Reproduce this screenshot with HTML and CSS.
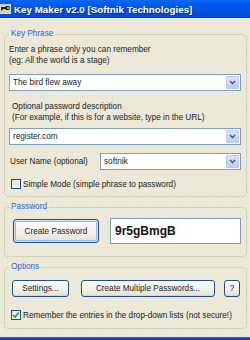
FILE: index.html
```html
<!DOCTYPE html>
<html lang="en">
<head>
  <meta charset="UTF-8">
  <title>Key Maker v2.0</title>
  <link rel="stylesheet" href="styles.css">
</head>
<body>

  <div class="window">
    <div class="titlebar">
      <svg class="app-icon" width="11" height="10" viewBox="0 0 11 10">
        <rect x="0" y="0" width="11" height="10" fill="#d8d4c4"/>
        <path d="M1 3 L5 3 L6 2 L9 2 L10 4 L9 6 L6 6 L5 5 L3 5 L2 7 L1 6 Z" fill="#222"/>
        <circle cx="8" cy="4" r="0.9" fill="#d8d4c4"/>
      </svg>
      <span>Key Maker v2.0 [Softnik Technologies]</span>
    </div>

    <div class="client">
      <fieldset class="group group-phrase">
        <legend>Key Phrase</legend>
        <p class="hint">Enter a phrase only you can remember<br>(eg: All the world is a stage)</p>
        <div class="combo combo-phrase">
          <span class="combo-text">The bird flew away</span>
          <span class="drop"><svg width="7" height="5" viewBox="0 0 7 5"><path d="M1 1 L3.5 3.5 L6 1" fill="none" stroke="#4d6185" stroke-width="1.6"/></svg></span>
        </div>
        <p class="hint hint-desc">Optional password description<br>(For example, if this is for a website, type in the URL)</p>
        <div class="combo combo-desc">
          <span class="combo-text">register.com</span>
          <span class="drop"><svg width="7" height="5" viewBox="0 0 7 5"><path d="M1 1 L3.5 3.5 L6 1" fill="none" stroke="#4d6185" stroke-width="1.6"/></svg></span>
        </div>
        <div class="user-row">
          <span class="user-label">User Name (optional)</span>
          <div class="combo combo-user">
            <span class="combo-text">softnik</span>
            <span class="drop"><svg width="7" height="5" viewBox="0 0 7 5"><path d="M1 1 L3.5 3.5 L6 1" fill="none" stroke="#4d6185" stroke-width="1.6"/></svg></span>
          </div>
        </div>
        <label class="check check-simple"><span class="box"></span>Simple Mode (simple phrase to password)</label>
      </fieldset>

      <fieldset class="group group-password">
        <legend>Password</legend>
        <div class="password-row">
          <button class="xp-button btn-create focused">Create Password</button>
          <div class="password-field">9r5gBmgB</div>
        </div>
      </fieldset>

      <fieldset class="group group-options">
        <legend>Options</legend>
        <div class="options-row">
          <button class="xp-button btn-settings">Settings...</button>
          <button class="xp-button btn-multi">Create Multiple Passwords...</button>
          <button class="xp-button btn-help">?</button>
        </div>
        <label class="check check-remember"><span class="box checked"><svg width="8" height="8" viewBox="0 0 8 8"><path d="M1 4 L3 6 L7 1.5" fill="none" stroke="#21a121" stroke-width="1.6"/></svg></span>Remember the entries in the drop-down lists (not secure!)</label>
      </fieldset>
    </div>

    <div class="frame-bottom"></div>
  </div>

</body>
</html>
```

FILE: styles.css
```css
* {
  box-sizing: border-box;
}

body {
  margin: 0;
  padding: 0;
  font-family: 'Liberation Sans', Arial, sans-serif;
  font-size: 8.2px;
  color: #222;
  background-color: #ece9d8;
}

.window {
  width: 250px;
  height: 340px;
  overflow: hidden;
  display: flex;
  flex-direction: column;
  background-color: #ece9d8;
  background-image: radial-gradient(circle, #e3dfce 0.5px, transparent 0.9px);
  background-size: 5px 5px;
}

.titlebar {
  height: 18px;
  display: flex;
  align-items: center;
  gap: 2px;
  background: linear-gradient(#0a6af2 0%, #0058ee 25%, #0054e3 60%, #0046d0 100%);
  color: white;
  font-size: 9.8px;
  font-weight: bold;
  text-shadow: 1px 1px 0 #0c2b9a;
  white-space: nowrap;
}

.app-icon {
  flex: none;
}

.titlebar span {
  margin-left: 1px;
}

.client {
  padding: 0 3px 0 4px;
}

.group {
  margin: 0;
  padding: 0 5px 0 4px;
  border: 1px solid #d5d2be;
  border-radius: 4px;
}

.group legend {
  padding: 0 2px;
  color: #2a5fe0;
  line-height: 10px;
  font-size: 8.2px;
}

.group-phrase {
  margin-top: 11px;
  padding-bottom: 7px;
}

.group-password {
  margin-top: 5px;
  padding-bottom: 12px;
}

.group-options {
  margin-top: 5px;
  padding-bottom: 8px;
}

.hint {
  margin: 5px 0 0;
  line-height: 11px;
}

.hint-desc {
  margin-top: 10px;
  padding-left: 3px;
}

.combo {
  height: 17px;
  display: flex;
  align-items: stretch;
  background-color: white;
  border: 1px solid #7f9db9;
}

.combo-phrase {
  margin-top: 8px;
}

.combo-desc {
  margin-top: 5px;
}

.combo-text {
  flex: 1;
  padding-left: 3px;
  line-height: 15px;
}

.drop {
  width: 13px;
  margin: 1px;
  display: flex;
  align-items: center;
  justify-content: center;
  border: 1px solid #bccdf3;
  border-radius: 1px;
  background: linear-gradient(#d9e3fb, #bdcff7);
}

.user-row {
  margin-top: 8px;
  display: flex;
  align-items: center;
}

.user-label {
  width: 91px;
  padding-left: 1px;
}

.combo-user {
  flex: 1;
}

.check {
  display: flex;
  align-items: center;
  gap: 2px;
  height: 10px;
  white-space: nowrap;
}

.check-simple {
  margin-top: 9px;
  padding-left: 2px;
}

.check-remember {
  margin-top: 13px;
  padding-left: 2px;
}

.box {
  width: 10px;
  height: 10px;
  flex: none;
  display: flex;
  align-items: center;
  justify-content: center;
  border: 1px solid #1c5180;
  background: linear-gradient(135deg, #dcdcd7, #ffffff);
}

.password-row {
  margin-top: 6px;
  display: flex;
  align-items: center;
}

.xp-button {
  font-family: 'Liberation Sans', Arial, sans-serif;
  font-size: 8.2px;
  color: #222;
  padding: 0;
  border: 1px solid #1f4f86;
  border-radius: 3px;
  background: linear-gradient(#ffffff 0%, #f3f2ec 50%, #e6e3d8 90%, #d6d0c5 100%);
  cursor: pointer;
}

.btn-create {
  width: 86px;
  height: 24px;
  margin-left: 4px;
}

.focused {
  box-shadow: inset 0 0 0 1px #cee7ff, inset 0 0 0 2px #98b8ea;
}

.password-field {
  width: 131px;
  height: 26px;
  margin-left: 11px;
  padding-left: 4px;
  display: flex;
  align-items: center;
  background-color: white;
  border: 1px solid #7f9db9;
  font-size: 12px;
  font-weight: bold;
  color: #111;
}

.options-row {
  margin-top: 8px;
  display: flex;
}

.options-row .xp-button {
  height: 17px;
}

.btn-settings {
  width: 57px;
  margin-left: 3px;
}

.btn-multi {
  width: 134px;
  margin-left: 12px;
}

.btn-help {
  width: 16px;
  margin-left: 9px;
}

.frame-bottom {
  margin-top: auto;
  height: 3px;
  background: linear-gradient(#2a5fe0, #0831d9);
}
```
